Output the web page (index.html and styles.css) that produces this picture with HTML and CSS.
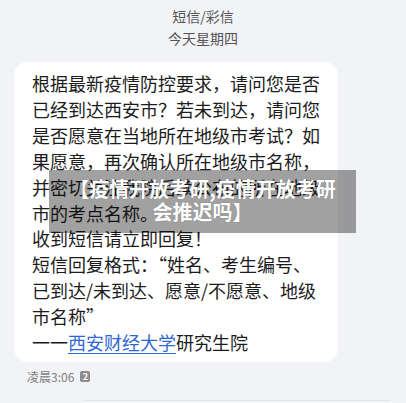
FILE: index.html
```html
<!DOCTYPE html>
<html lang="zh-CN">
<head>
  <meta charset="UTF-8" />
  <meta name="viewport" content="width=device-width, initial-scale=1.0"/>
  <title>短信/彩信</title>
  <link rel="stylesheet" href="styles.css">
</head>
<body>
  <div class="header">
    <div>短信/彩信</div>
    <div>今天星期四</div>
  </div>

  <div class="bubble">
    <p class="message">
      根据最新疫情防控要求，请问您是否<br>
      已经到达西安市？若未到达，请问您<br>
      是否愿意在当地所在地级市考试？如<br>
      果愿意，再次确认所在地级市名称，<br>
      并密切关注我院后续公布的所在地级<br>
      市的考点名称。<br>
      收到短信请立即回复！<br>
      短信回复格式：“姓名、考生编号、<br>
      已到达/未到达、愿意/不愿意、地级<br>
      市名称”<br>
      一一<a href="#">西安财经大学</a>研究生院
    </p>
    <div class="watermark">【疫情开放考研,疫情开放考研<br>会推迟吗】</div>
  </div>

  <div class="meta">
    <span>凌晨3:06</span>
    <span class="sim">2</span>
  </div>

  <div class="composer"></div>
</body>
</html>
```

FILE: styles.css
```css
body {
  margin: 0;
  background: #f2f3f6;
  font-family: "Noto Sans CJK SC", "Noto Sans", sans-serif;
  color: #1c1c1c;
  overflow: hidden;
}
.header {
  padding-top: 5px;
  text-align: center;
  font-size: 14px;
  line-height: 22px;
  color: #555;
}
.bubble {
  position: relative;
  width: 324px;
  margin: 13px 0 0 14px;
  padding: 9px 0 6px 18px;
  box-sizing: border-box;
  background: #fff;
  border-radius: 14px;
}
.message {
  margin: 0;
  font-size: 18px;
  line-height: 25.9px;
  white-space: nowrap;
}
.message a {
  color: #2f68d2;
  text-decoration: underline;
  text-underline-offset: 3px;
}
.watermark {
  position: absolute;
  left: 35px;
  top: 108px;
  width: 307px;
  height: 63px;
  padding-top: 7px;
  box-sizing: border-box;
  background: rgba(0, 0, 0, 0.37);
  color: #fff;
  font-size: 20px;
  font-weight: bold;
  line-height: 23px;
  text-align: center;
  text-shadow: 0 0 1px rgba(0, 0, 0, 0.3);
  white-space: nowrap;
}
.meta {
  display: flex;
  align-items: center;
  gap: 6px;
  margin: 7px 0 0 27px;
  font-size: 12px;
  line-height: 16px;
  color: #808080;
}
.sim {
  width: 10px;
  height: 11px;
  border-radius: 2px;
  background: #8c8c8c;
  color: #fff;
  font-size: 9px;
  font-weight: bold;
  line-height: 11px;
  text-align: center;
}
.composer {
  margin: 15px 16px 0 83px;
  height: 20px;
  border-top: 1px solid #e3e4e8;
  background: #f5f6f8;
}
```
